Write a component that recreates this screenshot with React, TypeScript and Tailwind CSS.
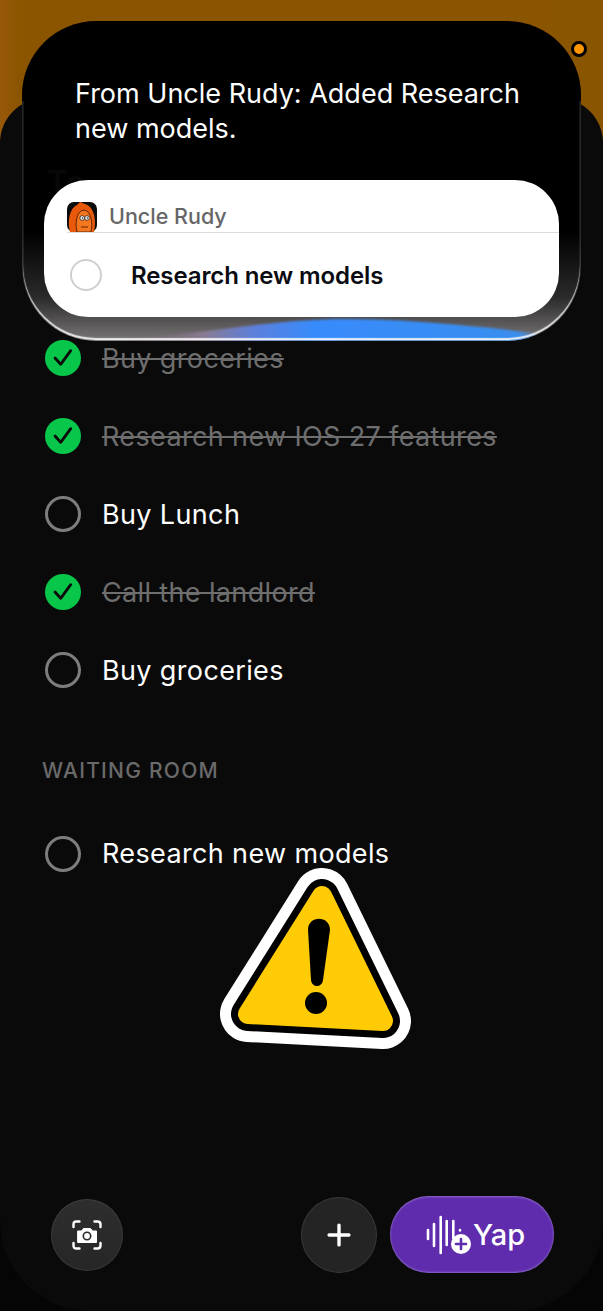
import { Plus } from "lucide-react";

function Todo({ label, done }: { label: string; done?: boolean }) {
  return (
    <div className="flex h-[78px] items-center gap-[21px] pl-[45px]">
      {done ? (
        <svg viewBox="0 0 36 36" className="h-9 w-9">
          <circle cx="18" cy="18" r="18" fill="#08c64a" />
          <path d="M10 18 L15.7 24.3 L25.7 10.7" fill="none" stroke="#0a0a0a" strokeWidth="2.8" strokeLinecap="round" strokeLinejoin="round" />
        </svg>
      ) : (
        <span className="h-9 w-9 rounded-full border-[3px] border-[#7d7d7d]" />
      )}
      <span
        className={
          done
            ? "translate-y-px text-[27px] tracking-[0.36px] text-[#6e6e6e] line-through decoration-[2px]"
            : "translate-y-px text-[27px] tracking-[0.36px] text-white"
        }
      >
        {label}
      </span>
    </div>
  );
}

function WarningSign() {
  const tri = "M102 28 L28 146 L163 153 Z";
  return (
    <svg viewBox="0 0 192 182" className="h-[182px] w-[192px]">
      <g strokeLinejoin="round">
        <path d={tri} fill="#fff" stroke="#fff" strokeWidth="56" />
        <path d={tri} fill="#000" stroke="#000" strokeWidth="34" />
        <path d={tri} fill="#ffcb05" stroke="#ffcb05" strokeWidth="20" />
      </g>
      <path d="M88 62 C88 47 110 47 110 62 L103 112 C102 120 92 120 91 112 Z" fill="#000" />
      <circle cx="96" cy="135" r="11" fill="#000" />
    </svg>
  );
}

function Avatar() {
  return (
    <svg viewBox="0 0 30 30" className="h-[30px] w-[30px] shrink-0">
      <rect width="30" height="30" rx="7" fill="#0b0b0b" />
      <path d="M3 30 C0 18 3 6 10 3 L13 0 L18 2 C26 4 30 16 27 30 Z" fill="#e8590c" />
      <path d="M10 30 C8 22 9 9 17 8 C24 9 26 20 24 30 Z" fill="#f4771f" stroke="#3a1500" strokeWidth="0.8" />
      <circle cx="15.2" cy="16" r="2.3" fill="#fff" stroke="#222" strokeWidth="0.8" />
      <circle cx="20" cy="16" r="2.3" fill="#fff" stroke="#222" strokeWidth="0.8" />
      <circle cx="15.5" cy="16" r="0.7" fill="#111" />
      <circle cx="20.3" cy="16" r="0.7" fill="#111" />
      <path d="M14 25 H21" stroke="#3a1500" strokeWidth="0.8" />
    </svg>
  );
}

function Glow() {
  return (
    <svg viewBox="0 0 559 110" preserveAspectRatio="none" className="absolute inset-x-0 bottom-0 h-[110px] w-full">
      <defs>
        <linearGradient id="fade" x1="0" x2="0" y1="0" y2="1">
          <stop offset="0" stopColor="#000" />
          <stop offset="0.6" stopColor="#2a2a2a" />
          <stop offset="1" stopColor="#7a7678" />
        </linearGradient>
        <linearGradient id="band" x1="0" x2="1" y1="0" y2="0">
          <stop offset="0" stopColor="#6b6168" stopOpacity="0" />
          <stop offset="0.2" stopColor="#8a7a90" />
          <stop offset="0.32" stopColor="#5b80de" />
          <stop offset="0.45" stopColor="#378bfb" />
          <stop offset="0.9" stopColor="#3a8ef0" />
          <stop offset="1" stopColor="#7d8a90" stopOpacity="0" />
        </linearGradient>
        <filter id="soft">
          <feGaussianBlur stdDeviation="0.8" />
        </filter>
      </defs>
      <rect width="559" height="110" fill="url(#fade)" />
      <path d="M90 110 C170 104 240 90 315 88 C390 88 470 96 540 106 V110 Z" fill="url(#band)" filter="url(#soft)" />
    </svg>
  );
}

function Notification() {
  return (
    <div className="absolute left-[22px] top-[21px] h-[320px] w-[559px] overflow-hidden rounded-[74px] bg-black">
      <Glow />
      <span className="absolute left-[25px] top-[138px] text-[32px] font-semibold text-[#080808]">To</span>
      <div className="relative flex h-full flex-col px-[22px] pt-[55px]">
        <p className="pl-[31px] pr-[20px] text-[27px] leading-[35px] text-white">
          From Uncle Rudy: Added Research new models.
        </p>
        <div className="mt-[34px] h-[137px] overflow-hidden rounded-[44px] bg-white">
          <div className="ml-[23px] flex h-[53px] items-end gap-3 border-b border-[#dcdcdc]">
            <Avatar />
            <span className="text-[21.5px] font-medium leading-[31px] text-[#666]">Uncle Rudy</span>
          </div>
          <div className="flex h-[84px] items-center gap-[29px] pl-[26px]">
            <span className="h-8 w-8 rounded-full border-2 border-[#cfcfcf]" />
            <span className="translate-y-px text-[24px] font-semibold tracking-[-0.1px] text-[#0b0b12]">Research new models</span>
          </div>
        </div>
      </div>
      {/* glass rim, only on the sides and the bottom */}
      <div className="absolute inset-x-0 bottom-0 h-[240px] rounded-b-[74px] border-x border-b border-white/15 shadow-[inset_0_-2px_1px_rgba(255,255,255,0.85)]" />
    </div>
  );
}

function YapIcon() {
  return (
    <svg viewBox="0 0 46 40" className="h-10 w-[46px]" fill="none" stroke="#fff" strokeWidth="2.6" strokeLinecap="round">
      <path d="M2 15 V24 M8 9 V31 M14.7 2 V38 M20.7 6 V30 M27.3 6 V23 M34 15 V15.5" />
      <circle cx="35" cy="29" r="10" fill="#fff" stroke="none" />
      <path d="M35 24 V34 M30 29 H40" stroke="#5f2cae" />
    </svg>
  );
}

function ScanCamera() {
  return (
    <svg viewBox="0 0 30 30" className="h-[30px] w-[30px]" fill="none" stroke="#fff" strokeWidth="2.4" strokeLinecap="round">
      <path d="M1.5 7 V4.5 C1.5 2.5 2.5 1.5 4.5 1.5 H7.5 M22.5 1.5 H25.5 C27.5 1.5 28.5 2.5 28.5 4.5 V7 M28.5 23 V25.5 C28.5 27.5 27.5 28.5 25.5 28.5 H22.5 M7.5 28.5 H4.5 C2.5 28.5 1.5 27.5 1.5 25.5 V23" />
      <path d="M6 11 H9.5 L11.5 8.5 H18.5 L20.5 11 H24.5 V22.5 H6 Z" fill="#fff" stroke="#fff" strokeWidth="1" strokeLinejoin="round" />
      <circle cx="15" cy="16" r="3.7" stroke="#2a2a2a" strokeWidth="1.6" />
    </svg>
  );
}

export default function App() {
  return (
    <div className="relative h-[1311px] w-[603px] overflow-hidden bg-[#050505] bg-[linear-gradient(90deg,#98580a,#8b5500_3%,#8a5500)] bg-[length:100%_200px] bg-no-repeat font-['Inter','Liberation_Sans',sans-serif]">
      <div className="h-[98px]" />
      <div className="flex h-[1213px] flex-col rounded-t-[45px] rounded-b-[90px] bg-[#0a0a0a]">
        {/* list starts under the notification */}
        <div className="pt-[221px]">
          <Todo label="Buy groceries" done />
          <Todo label="Research new IOS 27 features" done />
          <Todo label="Buy Lunch" />
          <Todo label="Call the landlord" done />
          <Todo label="Buy groceries" />
        </div>
        <h2 className="mt-[46px] pl-[42px] text-[21px] font-medium tracking-[1.25px] text-[#6a6a6a]">WAITING ROOM</h2>
        <div className="mt-[28px]">
          <Todo label="Research new models" />
        </div>
        <div className="mt-auto flex items-center gap-[13px] pb-[38px] pl-[51px] pr-[49px]">
          <button className="flex h-[72px] w-[72px] items-center justify-center rounded-full bg-[linear-gradient(#2e2e2e,#262626)] shadow-[inset_0_0_0_1px_rgba(255,255,255,0.08)]">
            <ScanCamera />
          </button>
          <button className="ml-auto flex h-[76px] w-[76px] items-center justify-center rounded-full bg-[#242424] shadow-[inset_0_0_0_1px_rgba(255,255,255,0.1)]">
            <Plus size={34} strokeWidth={2.4} className="text-white" />
          </button>
          <button className="flex h-[77px] w-[164px] items-center justify-center gap-[1px] rounded-full bg-[#5f2cae] pl-[7px] shadow-[inset_0_1px_2px_rgba(255,255,255,0.3),inset_0_-1px_2px_rgba(255,255,255,0.25)]">
            <YapIcon />
            <span className="text-[29px] font-medium text-white">Yap</span>
          </button>
        </div>
      </div>
      <Notification />
      <span className="absolute left-[571px] top-[41px] h-4 w-4 rounded-full border-[3.5px] border-black bg-[#ff9500]" />
      <div className="absolute left-[220px] top-[868px]">
        <WarningSign />
      </div>
    </div>
  );
}
